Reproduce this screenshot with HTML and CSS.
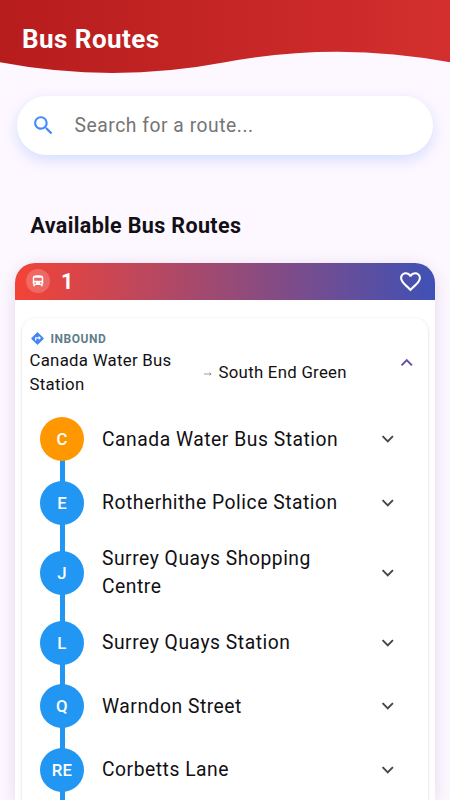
FILE: index.html
```html
<!DOCTYPE html>
<html lang="en">
<head>
<meta charset="utf-8">
<title>Bus Routes</title>
<link rel="stylesheet" href="styles.css">
</head>
<body>
<svg class="symbols" width="0" height="0" aria-hidden="true">
  <symbol id="chevron" viewBox="0 0 24 24"><path d="M16.59 8.59 12 13.17 7.41 8.59 6 10l6 6 6-6z"/></symbol>
</svg>
<header class="header">
  <svg class="wave" viewBox="0 0 450 84" aria-hidden="true">
    <defs><linearGradient id="red"><stop offset="0" stop-color="#b71c1c"/><stop offset="1" stop-color="#d32f2f"/></linearGradient></defs>
    <path fill="url(#red)" d="M0 0H450V62.3Q337.5 41 225 62.3T0 62.3Z"/>
  </svg>
  <h1 class="title">Bus Routes</h1>
</header>
<main>
  <div class="search">
    <svg class="search-icon" viewBox="0 0 24 24"><path d="M15.5 14h-.79l-.28-.27C15.41 12.59 16 11.11 16 9.5 16 5.91 13.09 3 9.5 3S3 5.91 3 9.5 5.91 16 9.5 16c1.61 0 3.09-.59 4.23-1.57l.27.28v.79l5 4.99L20.49 19l-4.99-5zm-6 0C7.01 14 5 11.99 5 9.5S7.01 5 9.5 5 14 7.01 14 9.5 11.99 14 9.5 14z"/></svg>
    <span class="placeholder">Search for a route...</span>
  </div>
  <h2 class="section-title">Available Bus Routes</h2>
  <section class="card">
    <div class="card-head">
      <span class="bus-badge"><svg viewBox="0 0 24 24"><path fill-rule="evenodd" d="M3 16c0 .9.4 1.700 1 2.200V20c0 .55.45 1 1 1h1c.55 0 1-.45 1-1v-1h10v1c0 .55.45 1 1 1h1c.55 0 1-.45 1-1v-1.800c.6-.5 1-1.300 1-2.200V6c0-3.500-4-4-9-4s-9 .5-9 4zM5.500 6.500h13v5h-13zM7 14a1.500 1.500 0 1 1 0 3 1.500 1.500 0 0 1 0-3zM17 14a1.500 1.500 0 1 1 0 3 1.500 1.500 0 0 1 0-3z"/></svg></span>
      <span class="number">1</span>
      <svg class="heart" viewBox="0 0 24 24"><path d="M16.5 3c-1.74 0-3.41.81-4.5 2.09C10.91 3.81 9.24 3 7.5 3 4.42 3 2 5.42 2 8.5c0 3.78 3.4 6.86 8.55 11.54L12 21.35l1.45-1.32C18.6 15.36 22 12.28 22 8.5 22 5.42 19.58 3 16.5 3zm-4.4 15.55l-.1.1-.1-.1C7.14 14.24 4 11.39 4 8.5 4 6.5 5.5 5 7.5 5c1.54 0 3.04.99 3.57 2.36h1.87C13.46 5.99 14.96 5 16.5 5c2 0 3.5 1.5 3.5 3.5 0 2.89-3.14 5.74-7.9 10.05z"/></svg>
    </div>
    <div class="panel">
      <div class="summary">
        <div class="direction">
          <svg viewBox="0 0 24 24"><path d="M21.71 11.29l-9-9c-.39-.39-1.02-.39-1.41 0l-9 9c-.39.39-.39 1.02 0 1.41l9 9c.39.39 1.02.39 1.41 0l9-9c.39-.38.39-1.01 0-1.41zM14 14.5V12h-4v3H8v-4c0-.55.45-1 1-1h5V7.5l3.5 3.5-3.5 3.5z"/></svg>
          <span>INBOUND</span>
        </div>
        <div class="ends">
          <span class="from">Canada Water Bus Station</span>
          <svg class="arrow" viewBox="0 0 9 6"><path d="M0 3H8M6.2 1.500 8 3 6.200 4.500"/></svg>
          <span class="to">South End Green</span>
        </div>
        <svg class="chevron open"><use href="#chevron"/></svg>
      </div>
      <ul class="stops">
        <li class="stop first"><span class="dot">C</span><span class="name">Canada Water Bus Station</span><svg class="chevron"><use href="#chevron"/></svg></li>
        <li class="stop"><span class="dot">E</span><span class="name">Rotherhithe Police Station</span><svg class="chevron"><use href="#chevron"/></svg></li>
        <li class="stop tall"><span class="dot">J</span><span class="name">Surrey Quays Shopping Centre</span><svg class="chevron"><use href="#chevron"/></svg></li>
        <li class="stop"><span class="dot">L</span><span class="name">Surrey Quays Station</span><svg class="chevron"><use href="#chevron"/></svg></li>
        <li class="stop"><span class="dot">Q</span><span class="name">Warndon Street</span><svg class="chevron"><use href="#chevron"/></svg></li>
        <li class="stop"><span class="dot">RE</span><span class="name">Corbetts Lane</span><svg class="chevron"><use href="#chevron"/></svg></li>
      </ul>
    </div>
  </section>
</main>
</body>
</html>
```
FILE: styles.css
```css
* { box-sizing: border-box; }
body {
  margin: 0;
  height: 800px;
  overflow: hidden;
  background: #fdf7ff;
  color: #111014;
  font-family: Roboto, "Liberation Sans", sans-serif;
}
h1, h2, ul { margin: 0; padding: 0; }
main { height: 716px; overflow: hidden; }
.symbols { position: absolute; }
.header { display: grid; height: 84px; }
.wave { grid-area: 1 / 1; width: 450px; height: 84px; }
.title {
  grid-area: 1 / 1;
  z-index: 1;
  padding: 24px 0 0 22px;
  color: #fff;
  font-size: 26px;
  line-height: 31px;
  font-weight: 700;
  letter-spacing: .45px;
}
.search {
  display: flex;
  align-items: center;
  height: 59px;
  margin: 11.5px 17px 0;
  padding-left: 13.5px;
  border-radius: 30px;
  background: #fff;
  box-shadow: 0 5px 14px rgba(68, 138, 255, .22);
}
.search-icon { width: 25px; height: 25px; fill: #448aff; }
.placeholder { margin-left: 19px; color: #757575; font-size: 19.3px; letter-spacing: .53px; }
.section-title {
  margin: 57px 0 0 30.5px;
  font-size: 21.5px;
  line-height: 28px;
  font-weight: 700;
  letter-spacing: .35px;
}
.card {
  height: 537px;
  margin: 23px 15.5px 0 15px;
  border-radius: 22px 22px 0 0;
  background: #fff;
  box-shadow: 0 3px 16px rgba(80, 60, 120, .15);
}
.card-head {
  display: flex;
  align-items: center;
  height: 37px;
  padding: 0 12px 0 11px;
  border-radius: 20px 20px 0 0;
  background: linear-gradient(90deg, #f44336, #3f51b5);
}
.bus-badge {
  display: grid;
  place-items: center;
  width: 24px;
  height: 24px;
  border-radius: 50%;
  background: rgba(255, 255, 255, .2);
}
.bus-badge svg { width: 14px; height: 14px; fill: #fff; }
.number { margin-left: 11px; color: #fff; font-size: 21.5px; font-weight: 700; letter-spacing: .5px; }
.heart { width: 25px; height: 25px; margin-left: auto; fill: #fff; }
.panel {
  height: 482px;
  margin: 18px 6.5px 0 7px;
  border-radius: 14px 14px 0 0;
  background: #fff;
  box-shadow: 0 1px 3px rgba(60, 50, 80, .22);
}
.summary {
  display: grid;
  grid-template-columns: 1fr 24px;
  grid-template-rows: 16px 50px;
  height: 90px;
  padding: 13px 9px 0 7.5px;
}
.direction {
  display: flex;
  align-items: center;
  color: #607d8b;
  font-size: 12px;
  font-weight: 700;
  letter-spacing: .55px;
}
.direction svg { width: 15px; height: 15px; margin-right: 6px; fill: #4285f4; }
.ends {
  grid-column: 1;
  display: flex;
  align-items: center;
  padding-top: 1px;
  font-size: 16.8px;
  line-height: 24.2px;
  letter-spacing: .28px;
}
.from { width: 174px; padding-right: 15px; }
.arrow { width: 8px; height: 6px; margin: 4px 7px 0 0; stroke: #777; stroke-width: .8; fill: none; }
.chevron { width: 23.5px; height: 23.5px; fill: #49454f; }
.summary .chevron { grid-area: 1 / 2 / 3 / 3; margin-top: 20px; fill: #6650a4; }
.open { transform: rotate(180deg); }
.stops { height: 392px; overflow: hidden; list-style: none; }
.stop {
  display: grid;
  grid-template-columns: 44px 256px 24px;
  column-gap: 18px;
  align-items: center;
  height: 63.45px;
  padding-left: 18px;
  background: linear-gradient(#2196f3, #2196f3) 38px 0 / 5px 100% no-repeat;
}
.tall { height: 76.6px; }
.first { background-position: 38px 32px; }
.dot {
  display: grid;
  place-items: center;
  width: 44px;
  height: 44px;
  border-radius: 50%;
  background: #2196f3;
  color: #fff;
  font-size: 16.8px;
  font-weight: 500;
  letter-spacing: .2px;
}
.first .dot { background: #ff9800; }
.name { max-width: 245px; padding-top: 1px; font-size: 19.3px; line-height: 28px; letter-spacing: .52px; }
```
